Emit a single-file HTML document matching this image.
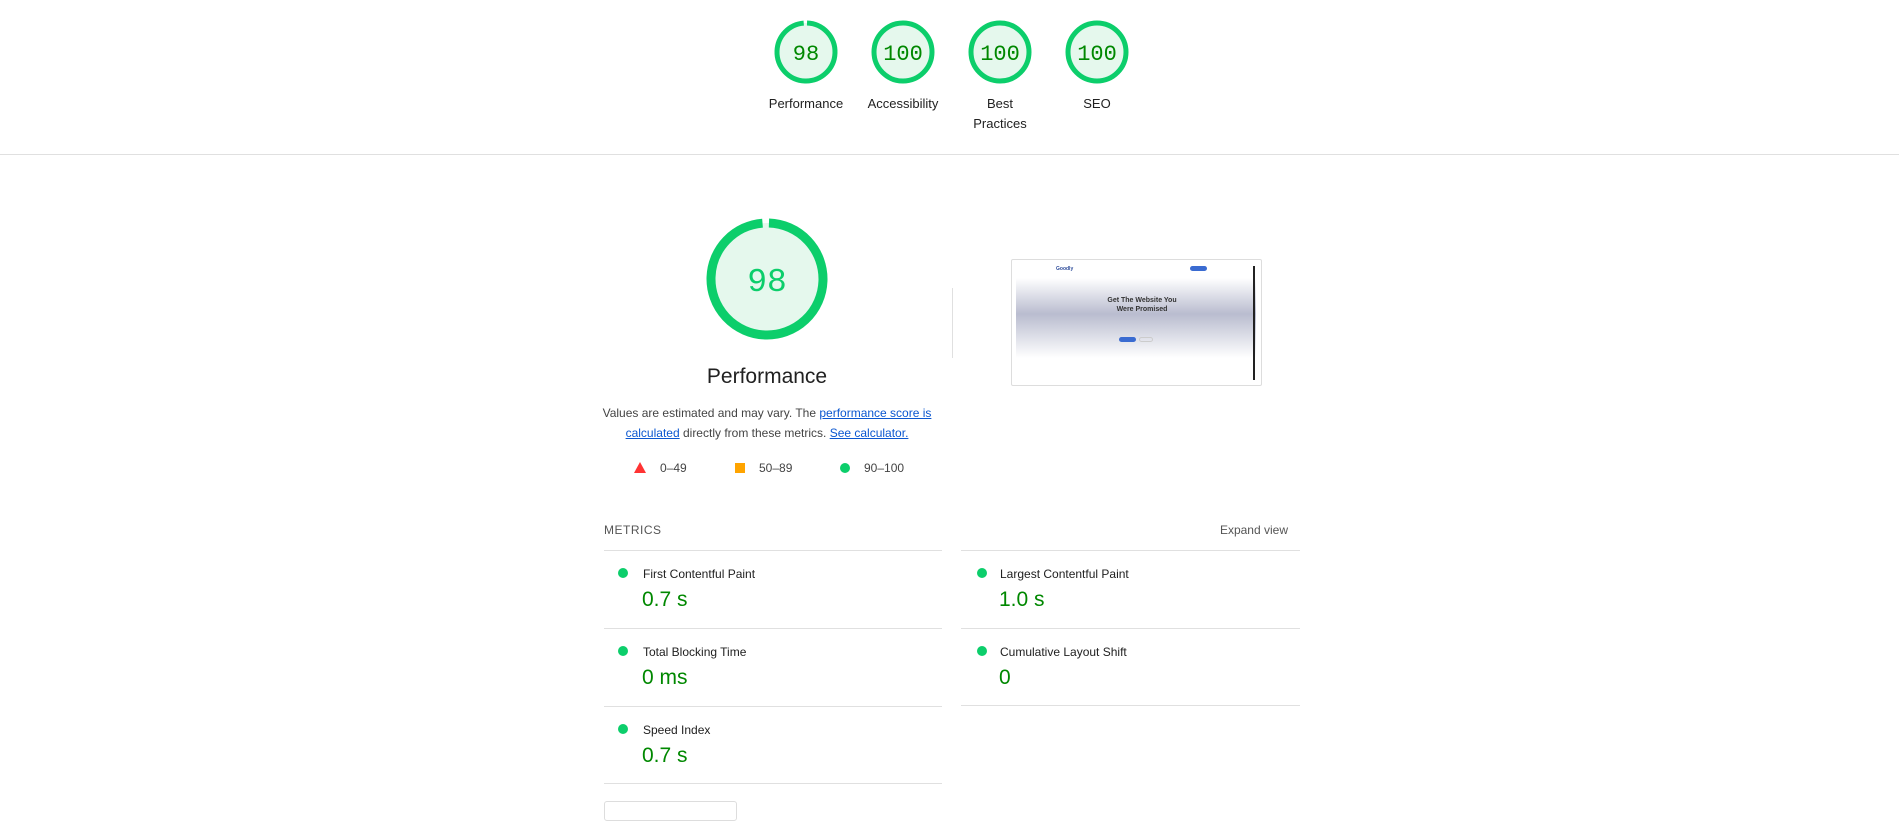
<!DOCTYPE html>
<html><head><meta charset="utf-8"><style>
*{margin:0;padding:0;box-sizing:border-box}
body{width:1899px;height:806px;background:#fff;font-family:"Liberation Sans",sans-serif;color:#212121;position:relative;overflow:hidden}
.a{position:absolute}
.lbl{font-size:13px;text-align:center;width:110px;line-height:20px;color:#212121}
.g text{font-family:"Liberation Mono",monospace;fill:#008800}
.line{position:absolute;height:1px;background:#e0e0e0}
.mt{font-size:12px;color:#212121}
.mv{font-size:21px;color:#008800}
.dot{position:absolute;width:10px;height:10px;border-radius:50%;background:#0cce6b}
a{color:#0b57d0;text-decoration:underline}
</style></head><body>
<svg class="a g" style="left:0;top:0" width="1899" height="110">
 <g transform="translate(806,52)"><circle r="29" fill="#e5f8ed" stroke="#0cce6b" stroke-width="5" stroke-dasharray="178.6 3.6" transform="rotate(-88)"/><text y="8" text-anchor="middle" font-size="22">98</text></g>
 <g transform="translate(903,52)"><circle r="29" fill="#e5f8ed" stroke="#0cce6b" stroke-width="5"/><text y="8" text-anchor="middle" font-size="22">100</text></g>
 <g transform="translate(1000,52)"><circle r="29" fill="#e5f8ed" stroke="#0cce6b" stroke-width="5"/><text y="8" text-anchor="middle" font-size="22">100</text></g>
 <g transform="translate(1097,52)"><circle r="29" fill="#e5f8ed" stroke="#0cce6b" stroke-width="5"/><text y="8" text-anchor="middle" font-size="22">100</text></g>
</svg>
<div class="a lbl" style="left:751px;top:94px">Performance</div>
<div class="a lbl" style="left:848px;top:94px">Accessibility</div>
<div class="a lbl" style="left:945px;top:94px">Best<br>Practices</div>
<div class="a lbl" style="left:1042px;top:94px">SEO</div>
<div class="line" style="left:0;top:154px;width:1899px"></div>

<svg class="a g" style="left:700px;top:212px" width="134" height="134">
 <circle cx="67" cy="67" r="56" fill="#e5f8ed" stroke="#0cce6b" stroke-width="9" stroke-dasharray="345 7" transform="rotate(-88 67 67)"/>
 <text x="67" y="79" text-anchor="middle" font-size="33" style="fill:#0cce6b">98</text>
</svg>
<div class="a" style="left:617px;top:365px;width:300px;text-align:center;font-size:21px">Performance</div>
<div class="a" style="left:567px;top:403px;width:400px;text-align:center;font-size:12px;line-height:20px;color:#444">Values are estimated and may vary. The <a>performance score is</a><br><a>calculated</a> directly from these metrics. <a>See calculator.</a></div>
<svg class="a" style="left:633px;top:461px" width="14" height="13"><polygon points="7,1 13,12 1,12" fill="#f33"/></svg>
<div class="a" style="left:660px;top:461px;font-size:12px;color:#444">0–49</div>
<div class="a" style="left:735px;top:463px;width:10px;height:10px;background:#ffa400"></div>
<div class="a" style="left:759px;top:461px;font-size:12px;color:#444">50–89</div>
<div class="dot" style="left:840px;top:463px"></div>
<div class="a" style="left:864px;top:461px;font-size:12px;color:#444">90–100</div>
<div class="a" style="left:952px;top:288px;width:1px;height:70px;background:#e0e0e0"></div>

<div class="a" style="left:1011px;top:259px;width:251px;height:127px;border:1px solid #ddd;border-radius:2px;background:#fff;overflow:hidden">
 <div class="a" style="left:4px;top:18px;width:240px;height:80px;background:linear-gradient(#fff,#b9bccf 45%,#fff)"></div>
 <div class="a" style="left:44px;top:6px;font-size:5px;color:#2d4b9a;font-weight:bold">Goodly</div>
 <div class="a" style="left:178px;top:6px;width:17px;height:5px;border-radius:3px;background:#3a6bd1"></div>
 <div class="a" style="left:60px;top:36px;width:140px;text-align:center;font-size:7px;font-weight:bold;color:#333;line-height:9px">Get The Website You<br>Were Promised</div>
 <div class="a" style="left:107px;top:77px;width:17px;height:5px;border-radius:3px;background:#3a6bd1"></div>
 <div class="a" style="left:127px;top:77px;width:14px;height:5px;border-radius:3px;border:1px solid #ccc"></div>
 <div class="a" style="left:241px;top:6px;width:2px;height:114px;background:#222"></div>
</div>

<div class="a" style="left:604px;top:523px;font-size:12px;letter-spacing:.5px;color:#555">METRICS</div>
<div class="a" style="left:1203px;top:523px;width:85px;text-align:right;font-size:12px;color:#555">Expand view</div>
<div class="line" style="left:604px;top:550px;width:338px"></div>
<div class="line" style="left:961px;top:550px;width:339px"></div>
<div class="line" style="left:604px;top:628px;width:338px"></div>
<div class="line" style="left:961px;top:628px;width:339px"></div>
<div class="line" style="left:604px;top:706px;width:338px"></div>
<div class="line" style="left:961px;top:705px;width:339px"></div>
<div class="line" style="left:604px;top:783px;width:338px"></div>

<div class="dot" style="left:618px;top:568px"></div><div class="a mt" style="left:643px;top:567px">First Contentful Paint</div><div class="a mv" style="left:642px;top:588px">0.7 s</div>
<div class="dot" style="left:977px;top:568px"></div><div class="a mt" style="left:1000px;top:567px">Largest Contentful Paint</div><div class="a mv" style="left:999px;top:588px">1.0 s</div>
<div class="dot" style="left:618px;top:646px"></div><div class="a mt" style="left:643px;top:645px">Total Blocking Time</div><div class="a mv" style="left:642px;top:666px">0 ms</div>
<div class="dot" style="left:977px;top:646px"></div><div class="a mt" style="left:1000px;top:645px">Cumulative Layout Shift</div><div class="a mv" style="left:999px;top:666px">0</div>
<div class="dot" style="left:618px;top:724px"></div><div class="a mt" style="left:643px;top:723px">Speed Index</div><div class="a mv" style="left:642px;top:744px">0.7 s</div>
<div class="a" style="left:604px;top:801px;width:133px;height:20px;border:1px solid #ddd;border-radius:3px"></div>
</body></html>
